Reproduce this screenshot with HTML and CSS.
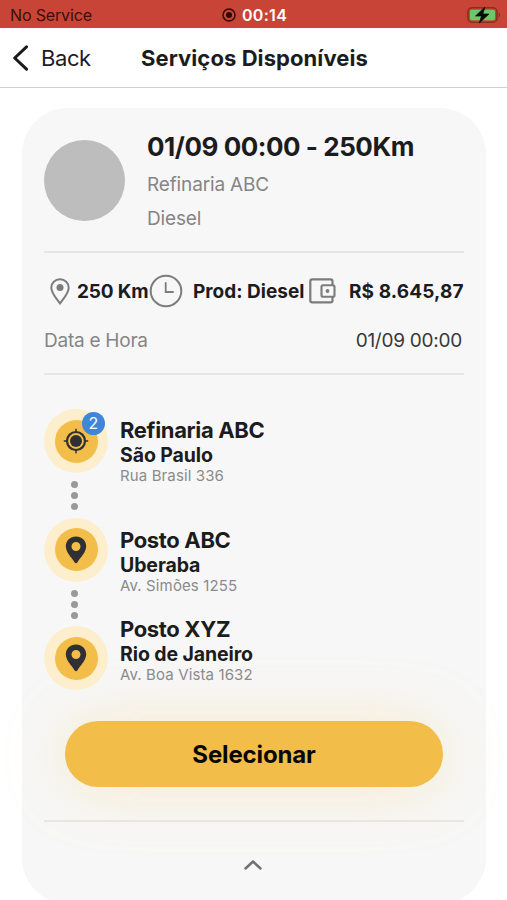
FILE: index.html
```html
<!DOCTYPE html>
<html lang="pt-BR">
<head>
<meta charset="utf-8">
<title>Serviços Disponíveis</title>
<link rel="stylesheet" href="styles.css">
</head>
<body>
<div class="screen">
  <div class="status">
    <span class="carrier">No Service</span>
    <span class="clock">
      <svg width="14" height="14" viewBox="0 0 14 14"><circle cx="7" cy="7" r="6" fill="none" stroke="#2b0b07" stroke-width="1.5"/><circle cx="7" cy="7" r="3" fill="#2b0b07"/></svg>
      <span class="time">00:14</span>
    </span>
    <svg class="battery" width="34" height="18" viewBox="0 0 34 18"><rect x="1" y="1.8" width="29" height="14.4" rx="4" fill="none" stroke="#87301f" stroke-width="1.6"/><rect x="3" y="3.8" width="25" height="10.4" rx="2" fill="#69c867"/><path d="M31.7 6.5c1.7.8 1.7 4.2 0 5z" fill="#87301f"/><path d="M18 1 8.5 10h6L12.300 17 22 8h-6.200z" fill="#0c0a08" stroke="#0c0a08" stroke-width=".7" stroke-linejoin="round"/></svg>
  </div>
  <header class="nav">
    <svg class="chevron" width="16" height="26" viewBox="0 0 16 26"><path d="M14.500 1.800 2.700 13l11.800 11.200" fill="none" stroke="#1b1b1d" stroke-width="3" stroke-linecap="round" stroke-linejoin="round"/></svg>
    <span class="back">Back</span>
    <h1 class="title">Serviços Disponíveis</h1>
  </header>
  <main class="card">
    <section class="summary">
      <div class="avatar"></div>
      <div class="info">
        <h2 class="heading">01/09 00:00 - 250Km</h2>
        <p class="sub place">Refinaria ABC</p>
        <p class="sub fuel">Diesel</p>
      </div>
    </section>
    <section class="details">
      <div class="facts">
        <svg class="i-pin" width="20" height="27" viewBox="0 0 20 27"><path d="M10 1.300c-5 0-8.700 3.700-8.700 8.400C1.300 15.500 7 21 10 25.400 13 21 18.700 15.500 18.700 9.700c0-4.700-3.700-8.400-8.700-8.400z" fill="none" stroke="#7c7c7c" stroke-width="2"/><circle cx="10" cy="9.500" r="3.500" fill="#7c7c7c"/></svg>
        <span class="fact km">250 Km</span>
        <svg class="i-clock" width="34" height="34" viewBox="0 0 34 34"><circle cx="17" cy="17" r="15.300" fill="none" stroke="#7c7c7c" stroke-width="2"/><path d="M16.700 8.800v9.200h7.300" fill="none" stroke="#7c7c7c" stroke-width="1.800" stroke-linecap="round"/></svg>
        <span class="fact prod">Prod: Diesel</span>
        <svg class="i-wallet" width="27" height="26" viewBox="0 0 27 26"><path d="M23.500 7V3.200c0-1.200-.7-1.900-1.900-1.900H3.200C2 1.300 1.300 2 1.300 3.200v19.200c0 1.200.7 1.900 1.900 1.900h18.400c1.200 0 1.900-.7 1.900-1.900V19" fill="none" stroke="#7c7c7c" stroke-width="2.200"/><rect x="12.500" y="7.200" width="13" height="11.600" rx="1.600" fill="none" stroke="#7c7c7c" stroke-width="2.100"/><circle cx="18.500" cy="13" r="1.900" fill="#7c7c7c"/></svg>
        <span class="fact price">R$ 8.645,87</span>
      </div>
      <div class="when"><span class="label">Data e Hora</span><span class="value">01/09 00:00</span></div>
    </section>
    <section class="route">
      <div class="track">
        <div class="node"><div class="core"><svg width="26" height="26" viewBox="0 0 26 26"><circle cx="13" cy="13" r="9" fill="none" stroke="#302f33" stroke-width="2.200"/><circle cx="13" cy="13" r="6" fill="#302f33"/><path d="M13 .8V5M13 21v4.200M.8 13H5M21 13h4.200" stroke="#302f33" stroke-width="1.500"/></svg></div><span class="badge">2</span></div>
        <div class="dots"><i></i><i></i><i></i></div>
        <div class="node"><div class="core"><svg width="22" height="28" viewBox="0 0 22 28"><path fill-rule="evenodd" d="M11 .5C5.200.5.800 4.800.800 10.200c0 6.200 6.300 11.600 8.900 16.200.6 1.100 2 1.100 2.600 0 2.600-4.600 8.900-10 8.900-16.200C21.200 4.800 16.800.5 11 .5zm0 5.500a4.500 4.500 0 1 1 0 9 4.500 4.500 0 0 1 0-9z" fill="#302f33"/></svg></div></div>
        <div class="dots"><i></i><i></i><i></i></div>
        <div class="node"><div class="core"><svg width="22" height="28" viewBox="0 0 22 28"><path fill-rule="evenodd" d="M11 .5C5.200.5.800 4.800.800 10.200c0 6.200 6.300 11.600 8.900 16.200.6 1.100 2 1.100 2.600 0 2.600-4.600 8.900-10 8.900-16.200C21.200 4.800 16.800.5 11 .5zm0 5.500a4.500 4.500 0 1 1 0 9 4.500 4.500 0 0 1 0-9z" fill="#302f33"/></svg></div></div>
      </div>
      <div class="stops">
        <div class="stop first"><h3>Refinaria ABC</h3><h4>São Paulo</h4><p>Rua Brasil 336</p></div>
        <div class="stop second"><h3>Posto ABC</h3><h4>Uberaba</h4><p>Av. Simões 1255</p></div>
        <div class="stop"><h3>Posto XYZ</h3><h4>Rio de Janeiro</h4><p>Av. Boa Vista 1632</p></div>
      </div>
    </section>
    <button class="select"><span>Selecionar</span></button>
    <div class="collapse"><svg width="20" height="12" viewBox="0 0 20 12"><path d="m2.500 9.500 7.500-7 7.500 7" fill="none" stroke="#727272" stroke-width="2.500" stroke-linecap="round" stroke-linejoin="round"/></svg></div>
  </main>
</div>
</body>
</html>
```
FILE: styles.css
```css
* { box-sizing: border-box; margin: 0; padding: 0; }
body { background: #fff; font-family: Inter, "Liberation Sans", sans-serif; color: #1c1c1e; overflow: hidden; }
.screen { width: 507px; height: 900px; overflow: hidden; }
svg { display: block; flex: none; }
span, h1, h2, h3, h4, p { white-space: nowrap; }

.status { height: 28px; background: #c74436; display: grid; grid-template-columns: 222px 1fr 40px; align-items: center; padding-top: 2px; }
.carrier { padding-left: 10px; font-size: 16px; color: #3a0f09; letter-spacing: -.15px; }
.clock { display: flex; align-items: center; gap: 6px; color: #fff; font-size: 16px; font-weight: 600; letter-spacing: .3px; }

.nav { height: 60px; border-bottom: 1px solid #cfcfcf; display: grid; grid-template-columns: 41px 100px 1fr; align-items: center; }
.chevron { margin-left: 12px; }
.back { font-size: 22px; letter-spacing: -.4px; }
.title { font-size: 22px; font-weight: 650; letter-spacing: .08px; }

.card { margin: 20px 21px 0 22px; height: 796px; border-radius: 46px; background: #f7f7f7; padding: 0 22px; }
.summary { height: 145px; display: flex; border-bottom: 2px solid #e6e6e6; }
.avatar { width: 81px; height: 81px; margin: 32px 22px 0 0; border-radius: 50%; background: #bdbdbd; }
.heading { margin-top: 21px; font-size: 26px; line-height: 36px; font-weight: 700; letter-spacing: -.46px; }
.sub { font-size: 19px; line-height: 34px; color: #858585; letter-spacing: -.15px; }
.place { margin-top: 3px; }

.details { height: 122px; padding-top: 21px; border-bottom: 2px solid #e6e6e6; }
.facts { height: 34px; display: flex; align-items: center; padding-left: 6px; }
.fact { font-size: 19px; font-weight: 650; }
.km { width: 72px; margin-left: 7px; letter-spacing: -.15px; }
.prod { width: 112px; margin-left: 10px; }
.i-wallet { margin-left: 4px; }
.price { margin-left: 13px; letter-spacing: .12px; }
.when { display: flex; justify-content: space-between; margin-top: 20px; padding-right: 2px; font-size: 19px; line-height: 26px; letter-spacing: -.25px; }
.label { color: #858585; }
.value { color: #38383a; }

.route { display: flex; padding-top: 34px; height: 346px; }
.track { width: 76px; }
.node { position: relative; width: 64px; height: 64px; border-radius: 50%; background: #fdefcd; display: grid; place-items: center; }
.core { width: 43px; height: 43px; border-radius: 50%; background: #f2bd48; display: grid; place-items: center; }
.badge { position: absolute; right: 3px; top: 3px; width: 23px; height: 23px; border-radius: 50%; background: #3f86d8; color: #fff; font-size: 16px; line-height: 23px; text-align: center; }
.dots { height: 44.500px; padding: 8px 0 0 27px; display: flex; flex-direction: column; gap: 4px; }
.dots i { width: 7px; height: 7px; border-radius: 50%; background: #999; }
.stop h3 { font-size: 22px; line-height: 28px; font-weight: 650; letter-spacing: -.35px; }
.stop h4 { font-size: 19.500px; line-height: 22px; font-weight: 650; letter-spacing: -.1px; }
.stop p { font-size: 15px; line-height: 20px; color: #8b8b8b; letter-spacing: .12px; }
.stops { padding-top: 7px; }
.first { height: 110px; }
.second { height: 88.500px; }

.select { display: block; width: 378px; height: 66px; margin: 0 0 0 21px; border: 0; border-radius: 33px; background: #f2bd48; color: #090704; font: 650 24px Inter, "Liberation Sans", sans-serif; letter-spacing: -.15px; box-shadow: 0 2px 60px rgba(248, 212, 115, .34); }
.collapse { margin-top: 33px; border-top: 2px solid #e9e6e0; display: flex; justify-content: center; padding-top: 37px; padding-right: 2px; }
```
